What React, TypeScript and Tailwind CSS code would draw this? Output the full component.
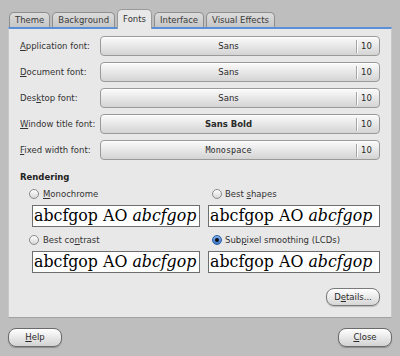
import type { ReactNode } from "react";

const tabs = ["Theme", "Background", "Fonts", "Interface", "Visual Effects"];

function Key({ children }: { children: ReactNode }) {
  return <span className="underline underline-offset-[1px] decoration-[1px]">{children}</span>;
}

interface FontRowProps {
  label: ReactNode;
  font: string;
  fontClass?: string;
}

function FontRow({ label, font, fontClass = "" }: FontRowProps) {
  return (
    <div className="flex items-center h-[20px]">
      <div className="w-[80px] text-[#333]">{label}</div>
      <div className="flex-1 h-[20px] flex items-center rounded-[4px] border border-[#9a9a9a] bg-gradient-to-b from-[#fbfbfb] to-[#d4d4d4] shadow-[inset_0_1px_0_#ffffff]">
        <div className={`flex-1 text-center text-[#2a2a2a] ${fontClass}`}>{font}</div>
        <div className="w-px h-[13px] bg-[#a4a4a4] shadow-[1px_0_0_#ffffff]" />
        <div className="w-[22px] pl-[4px] text-[#2a2a2a]">10</div>
      </div>
    </div>
  );
}

function Radio({ checked = false }: { checked?: boolean }) {
  if (checked) {
    return (
      <span className="w-[10px] h-[10px] rounded-full border border-[#2d5c9e] bg-gradient-to-b from-[#7fb0ee] to-[#3b74c8] flex items-center justify-center">
        <span className="w-[4px] h-[4px] rounded-full bg-[#111]" />
      </span>
    );
  }
  return <span className="w-[10px] h-[10px] rounded-full border border-[#8a8a8a] bg-gradient-to-b from-[#ffffff] to-[#d6d6d6]" />;
}

function Preview() {
  return (
    <div className="h-[22px] bg-white border border-[#6e6e6e] overflow-hidden whitespace-nowrap pl-[1px] font-['DejaVu_Serif',serif] text-[15.8px] leading-[20px] text-black">
      abcfgop AO <span className="italic">abcfgop</span>
    </div>
  );
}

function PillButton({ children, width }: { children: ReactNode; width: string }) {
  return (
    <button
      className={`${width} h-[19px] rounded-[8px] border border-[#6a6a6a] bg-gradient-to-b from-[#ffffff] to-[#d2d2d2] shadow-[0_1px_1px_rgba(0,0,0,0.25)] text-[#2a2a2a] text-center`}
    >
      {children}
    </button>
  );
}

export default function App() {
  return (
    <div className="w-[400px] h-[356px] bg-[#bebebe] px-2 pt-[9px] flex flex-col font-['DejaVu_Sans',sans-serif] text-[8.5px] leading-none text-[#2e2e2e]">
      <div className="flex items-end gap-[2px] pl-[1px] h-[18px]">
        {tabs.map((t) =>
          t === "Fonts" ? (
            <div
              key={t}
              className="relative z-10 -mb-[2px] h-[20px] px-[5px] flex items-center rounded-t-[5px] border border-b-0 border-[#9a9a9a] bg-[#e8e8e8] text-[#333]"
            >
              {t}
            </div>
          ) : (
            <div
              key={t}
              className="h-[15px] px-[5px] flex items-center rounded-t-[5px] border border-b-0 border-[#8e8e8e] bg-gradient-to-b from-[#dcdcdc] to-[#c6c6c6] text-[#3a3a3a]"
            >
              {t}
            </div>
          )
        )}
      </div>

      <div className="h-[291px] bg-[#e8e8e8] border-t-2 border-t-[#5b8fd8] border-b border-b-[#a2a2a2] border-x border-x-[#c8c8c8] pt-[7px] pl-[11px] pr-[11px] flex flex-col">
        <div className="flex flex-col gap-[6px]">
          <FontRow label={<><Key>A</Key>pplication font:</>} font="Sans" />
          <FontRow label={<><Key>D</Key>ocument font:</>} font="Sans" />
          <FontRow label={<>Des<Key>k</Key>top font:</>} font="Sans" />
          <FontRow label={<><Key>W</Key>indow title font:</>} font="Sans Bold" fontClass="font-bold" />
          <FontRow label={<><Key>F</Key>ixed width font:</>} font="Monospace" fontClass="font-['DejaVu_Sans_Mono',monospace]" />
        </div>

        <div className="mt-[10px] h-[14px] flex items-center font-bold text-[#222]">Rendering</div>

        <div className="ml-[12px] mt-[3px] grid grid-cols-[168px_172px] gap-x-[8px]">
          <div className="flex flex-col">
            <div className="h-[14px] flex items-center gap-[4px] -ml-[3px] text-[#333]">
              <Radio />
              <span><Key>M</Key>onochrome</span>
            </div>
            <div className="mt-[4px]">
              <Preview />
            </div>
            <div className="mt-[6px] h-[14px] flex items-center gap-[4px] -ml-[3px] text-[#333]">
              <Radio />
              <span>Best co<Key>n</Key>trast</span>
            </div>
            <div className="mt-[4px]">
              <Preview />
            </div>
          </div>
          <div className="flex flex-col">
            <div className="h-[14px] flex items-center gap-[3px] ml-[4px] text-[#333]">
              <Radio />
              <span>Best <Key>s</Key>hapes</span>
            </div>
            <div className="mt-[4px]">
              <Preview />
            </div>
            <div className="mt-[6px] h-[14px] flex items-center gap-[3px] ml-[4px] text-[#333]">
              <Radio checked />
              <span>Sub<Key>p</Key>ixel smoothing (LCDs)</span>
            </div>
            <div className="mt-[4px]">
              <Preview />
            </div>
          </div>
        </div>

        <div className="mt-[15px] flex justify-end">
          <button className="w-[54px] h-[18px] rounded-[8px] border border-[#7a7a7a] bg-gradient-to-b from-[#ffffff] to-[#d6d6d6] shadow-[0_1px_1px_rgba(0,0,0,0.2)] text-[#2a2a2a]">
            D<Key>e</Key>tails...
          </button>
        </div>
      </div>

      <div className="mt-[10px] flex justify-between">
        <PillButton width="w-[54px]">
          <Key>H</Key>elp
        </PillButton>
        <PillButton width="w-[54px]">
          <Key>C</Key>lose
        </PillButton>
      </div>
    </div>
  );
}
